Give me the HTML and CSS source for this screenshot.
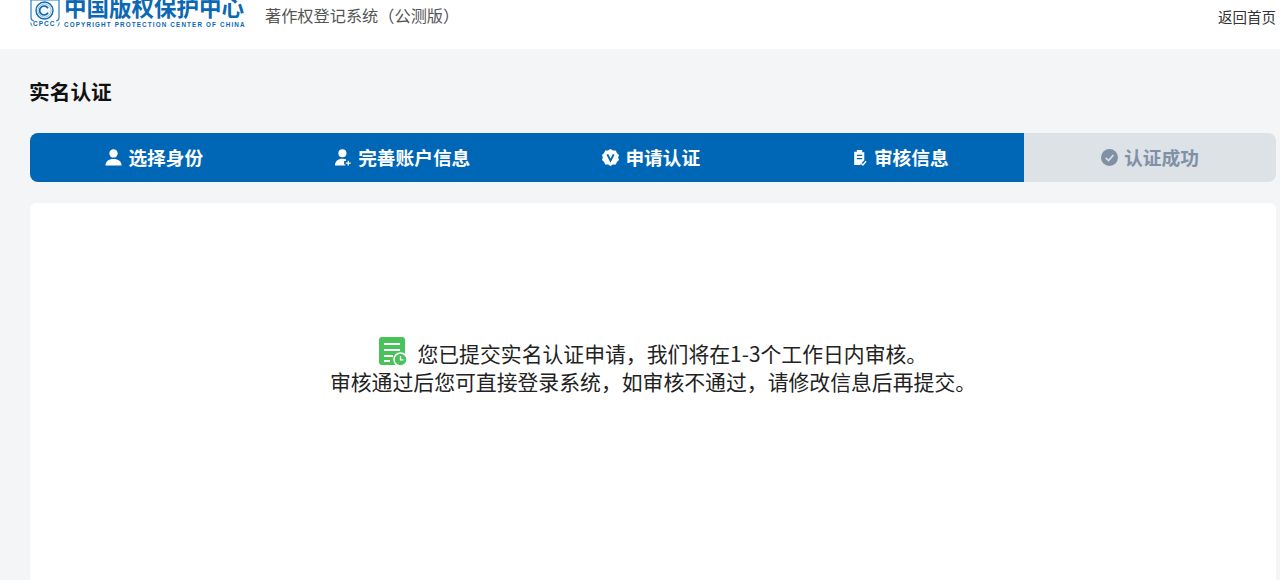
FILE: index.html
```html
<!DOCTYPE html>
<html lang="zh-CN">
<head>
<meta charset="utf-8">
<title>实名认证</title>
<link rel="stylesheet" href="styles.css">
</head>
<body>
<header class="topbar">
  <div class="brand">
    <svg class="logo-mark" viewBox="0 0 30 30" width="30" height="30">
      <path d="M1 0v17.500q0 3 3 3.500M29 0v17.500q0 3-3 3.500M1 0h28" fill="#f6fafd" stroke="#2b7fc4" stroke-width="1.200"/>
      <path d="M.8 22.500q0 3.500 1.700 3.500M29.200 22.500q0 3.500-1.700 3.500" fill="none" stroke="#2b7fc4" stroke-width="1"/>
      <circle cx="14.500" cy="10.500" r="8.500" fill="#f6fafd" stroke="#0a68b4" stroke-width="1.400"/>
      <circle cx="14.500" cy="10.500" r="6.600" fill="none" stroke="#8fbde0" stroke-width="1"/>
      <path d="M18 8.200a4.500 4.500 0 1 0 0 4.600" fill="none" stroke="#0a68b4" stroke-width="1.700"/>
    </svg>
    <span class="logo-cpcc">CPCC</span>
    <div class="logo-text">
      <span class="logo-cn">中国版权保护中心</span>
      <span class="logo-en">COPYRIGHT PROTECTION CENTER OF CHINA</span>
    </div>
    <span class="system-name">著作权登记系统（公测版）</span>
  </div>
  <a class="home-link" href="#">返回首页</a>
</header>

<main class="page">
  <h1 class="page-title">实名认证</h1>

  <ol class="steps">
    <li class="step">
      <svg class="step-icon" viewBox="0 0 16 16"><circle cx="8" cy="4.200" r="3.900" fill="currentColor"/><path d="M.4 15.600c0-4 3-6.300 7.600-6.300s7.600 2.300 7.600 6.300z" fill="currentColor"/></svg>
      <span>选择身份</span>
    </li>
    <li class="step">
      <svg class="step-icon" viewBox="0 0 16 16"><circle cx="7" cy="4" r="3.800" fill="currentColor"/><path d="M0 15.600c0-4.200 2.800-6.500 7-6.500 1.300 0 2.400.2 3.300.6v1.600H8.600v3.300h1.200v1z" fill="currentColor"/><path d="M12.500 11v4.600M10.200 13.300h4.600" stroke="currentColor" stroke-width="1.200"/></svg>
      <span>完善账户信息</span>
    </li>
    <li class="step">
      <svg class="step-icon" viewBox="0 0 16 16"><path d="M8 0l2.300 1.500 2.700-.2 1 2.500 2 1.800-.8 2.400.8 2.400-2 1.800-1 2.500-2.700-.2L8 16l-2.300-1.500-2.700.2-1-2.500-2-1.800L.8 8 0 5.600l2-1.800 1-2.500 2.700.2z" fill="currentColor"/><path d="M5 5l3 6 3-6" fill="none" stroke="#0067b6" stroke-width="1.800"/></svg>
      <span>申请认证</span>
    </li>
    <li class="step">
      <svg class="step-icon" viewBox="0 0 16 16"><path d="M5.500 1h5v2h2v7.500l-3.500 3.500v1H3v-12.500h2.500z" fill="currentColor"/><path d="M5.500 6h5M5.500 9h5" stroke="#0067b6" stroke-width="1.200"/><path d="M9.500 13.500l1.700 1.500 3-3.500" fill="none" stroke="currentColor" stroke-width="1.300"/></svg>
      <span>审核信息</span>
    </li>
    <li class="step step-pending">
      <svg class="step-icon" viewBox="0 0 18 18"><circle cx="9" cy="9" r="9" fill="currentColor"/><path d="M5 9.300l3 3 5.200-6" fill="none" stroke="#dce2e6" stroke-width="1.800"/></svg>
      <span>认证成功</span>
    </li>
  </ol>

  <section class="panel">
    <div class="notice">
      <p class="notice-line">
        <svg class="notice-icon" viewBox="0 0 28 30" width="28" height="30">
          <rect x="0" y="0" width="26" height="28" rx="3" fill="#4ac25a"/>
          <path d="M5 7h16M5 13h16M5 19h9M5 24h6" stroke="#fff" stroke-width="1.800"/>
          <circle cx="21.500" cy="22.500" r="6.500" fill="#4ac25a" stroke="#fff" stroke-width="1.500"/>
          <path d="M21.500 19v3.800h3" fill="none" stroke="#fff" stroke-width="1.300"/>
        </svg>
        您已提交实名认证申请，我们将在1-3个工作日内审核。
      </p>
      <p class="notice-line">审核通过后您可直接登录系统，如审核不通过，请修改信息后再提交。</p>
    </div>
  </section>
</main>
</body>
</html>
```
FILE: styles.css
```css
* { box-sizing: border-box; }
html, body { margin: 0; padding: 0; height: 100%; overflow: hidden; }
body {
  background: #f4f5f7;
  color: #222;
  font-family: "Noto Sans CJK SC", "Liberation Sans", sans-serif;
}
.topbar {
  height: 49px;
  background: #fff;
  display: flex;
  justify-content: space-between;
  padding: 0 4px 0 30px;
  overflow: hidden;
}
.brand { display: flex; align-items: flex-start; position: relative; height: 49px; }
.logo-mark { flex: none; }
.logo-cpcc {
  position: absolute;
  left: 3px;
  top: 21px;
  font: bold 6.500px/6px "Liberation Sans", sans-serif;
  letter-spacing: 1px;
  color: #0a68b4;
}
.logo-text { margin-left: 4px; display: flex; flex-direction: column; margin-top: -9px; width: 180px; }
.logo-cn {
  font-size: 22.500px;
  line-height: 30px;
  font-weight: 700;
  color: #0a68b4;
  white-space: nowrap;
}
.logo-en {
  font: bold 6.300px/7px "Liberation Sans", sans-serif;
  letter-spacing: 1.150px;
  color: #0a68b4;
  white-space: nowrap;
}
.system-name { margin-left: 21px; margin-top: 3px; font-size: 16.200px; line-height: 24px; color: #555; white-space: nowrap; }
.home-link { font-size: 14.500px; line-height: 20px; margin-top: 7px; color: #333; text-decoration: none; }

.page { padding: 0 4px 0 30px; }
.page-title { margin: 27px 0 0 -1px; font-size: 20.700px; line-height: 30px; font-weight: 700; color: #111; }
.steps {
  list-style: none;
  margin: 27px 0 0;
  padding: 0;
  height: 49px;
  display: grid;
  grid-template-columns: repeat(4, 1fr) 252px;
}
.step {
  display: flex;
  align-items: center;
  justify-content: center;
  gap: 6px;
  background: #0067b6;
  color: #fff;
  font-size: 18.700px;
  font-weight: 700;
  white-space: nowrap;
}
.step span { margin-bottom: 2px; }
.step:first-child { border-radius: 8px 0 0 8px; }
.step-icon { width: 17px; height: 17px; flex: none; }
.step-pending { background: #dce2e6; color: #8090a7; border-radius: 0 8px 8px 0; }
.panel {
  margin-top: 21px;
  height: 400px;
  background: #fff;
  border-radius: 6px 6px 0 0;
  padding-top: 134px;
}
.notice { text-align: center; color: #222; font-size: 20.850px; line-height: 28px; }
.notice-line { margin: 0; }
.notice-icon { vertical-align: -5px; margin-right: 6px; }
```
